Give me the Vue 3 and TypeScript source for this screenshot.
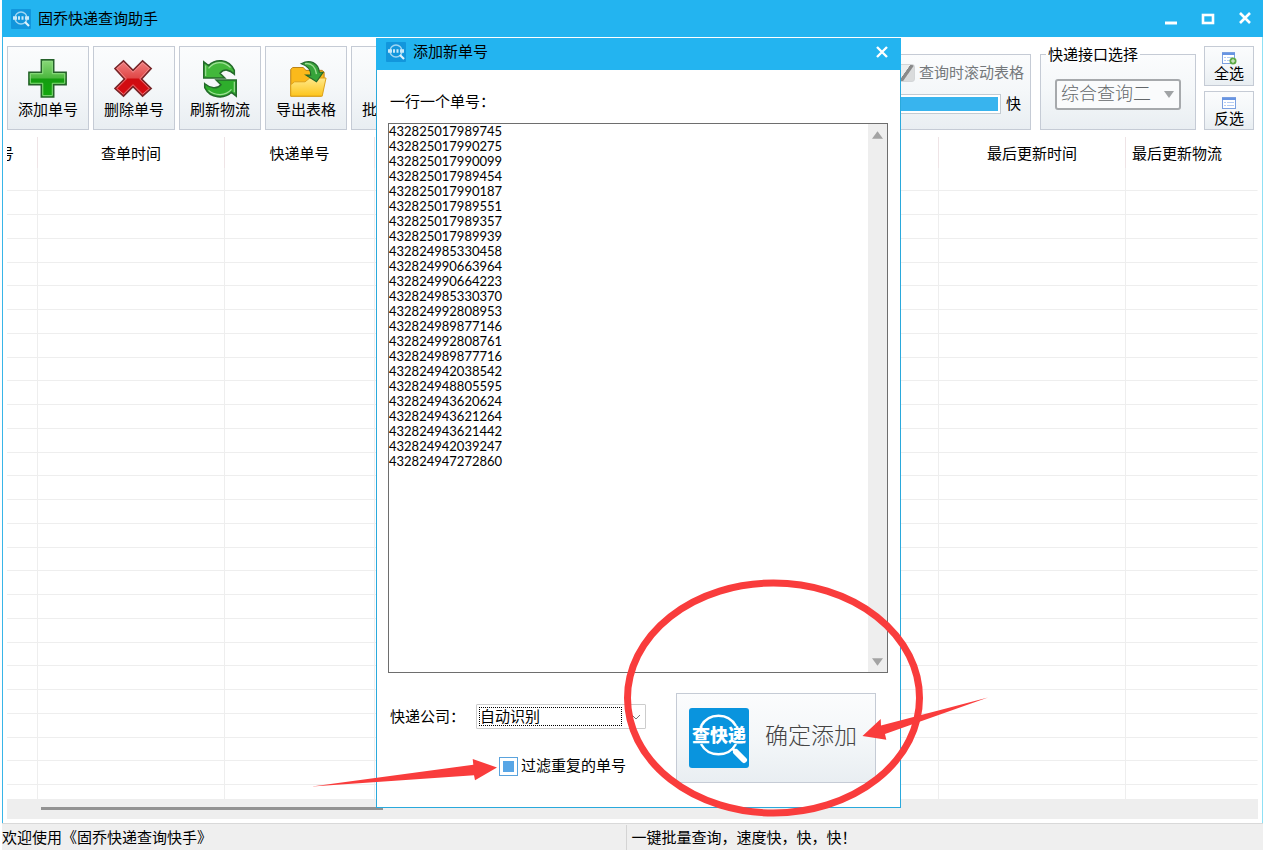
<script setup lang="ts">
import { ref } from 'vue'

interface Tool {
  icon: 'add' | 'remove' | 'refresh' | 'export' | 'batch'
  label: string
}

const tools: Tool[] = [
  { icon: 'add', label: '添加单号' },
  { icon: 'remove', label: '删除单号' },
  { icon: 'refresh', label: '刷新物流' },
  { icon: 'export', label: '导出表格' },
  { icon: 'batch', label: '批量操作' },
]

const rowCount = 26

const numbers = ref<string>(
  [
    '432825017989745',
    '432825017990275',
    '432825017990099',
    '432825017989454',
    '432825017990187',
    '432825017989551',
    '432825017989357',
    '432825017989939',
    '432824985330458',
    '432824990663964',
    '432824990664223',
    '432824985330370',
    '432824992808953',
    '432824989877146',
    '432824992808761',
    '432824989877716',
    '432824942038542',
    '432824948805595',
    '432824943620624',
    '432824943621264',
    '432824943621442',
    '432824942039247',
    '432824947272860',
  ].join('\n'),
)

const company = ref('自动识别')
const channel = ref('综合查询二')
const dedupe = ref(true)
const follow = ref(true)
</script>

<template>
  <div class="window">
    <header class="titlebar">
      <svg class="logo" viewBox="0 0 20 20" aria-hidden="true">
        <rect width="20" height="20" rx="1" fill="#1296dc" />
        <circle cx="10" cy="9" r="6" fill="none" stroke="#9ed6f3" stroke-width="1.4" />
        <path d="M14 13l4 4" stroke="#e3f4fc" stroke-width="2.2" />
        <path d="M2 9h4M7 9h2M10.500 9h2M14 9h4" stroke="#c9e9f9" stroke-width="3.600" />
      </svg>
      <h1>固乔快递查询助手</h1>
      <nav class="controls">
        <button type="button" aria-label="最小化">
          <svg viewBox="0 0 14 14"><path d="M1 11h12" stroke="#fff" stroke-width="3" /></svg>
        </button>
        <button type="button" aria-label="最大化">
          <svg viewBox="0 0 14 14"><rect x="2" y="3" width="10" height="8" fill="none" stroke="#fff" stroke-width="2.600" /></svg>
        </button>
        <button type="button" aria-label="关闭">
          <svg viewBox="0 0 14 14"><path d="M2 1l10 10M12 1L2 11" stroke="#fff" stroke-width="2.600" /></svg>
        </button>
      </nav>
    </header>

    <main class="content">
      <div class="toolbar">
        <button v-for="t in tools" :key="t.label" type="button" class="tool panel">
          <svg v-if="t.icon === 'add'" viewBox="0 0 44 44">
            <defs>
              <linearGradient id="green" x1="0" y1="0" x2="0" y2="1">
                <stop offset="0" stop-color="#8bd87a" /><stop offset=".48" stop-color="#4cb83f" />
                <stop offset=".52" stop-color="#149d10" /><stop offset="1" stop-color="#12a80c" />
              </linearGradient>
            </defs>
            <path d="M15 3h13v13h13v13H28v13H15V29H2V16h13z" fill="url(#green)" stroke="#25612a" stroke-width="1.600" />
            <path d="M16.500 4.500h10v13h13v10h-13v13h-10v-13h-13v-10h13z" fill="none" stroke="#8fdc83" stroke-width="1" />
          </svg>
          <svg v-else-if="t.icon === 'remove'" viewBox="0 0 44 44">
            <defs>
              <linearGradient id="red" x1="0" y1="0" x2="0" y2="1">
                <stop offset="0" stop-color="#f08080" /><stop offset=".48" stop-color="#e04848" />
                <stop offset=".52" stop-color="#cf0b10" /><stop offset="1" stop-color="#d60b12" />
              </linearGradient>
            </defs>
            <path d="M11 4l10 10L31 4l9 8-10 11 10 10-9 8-10-10-10 10-9-8 10-10L2 12z" fill="url(#red)" stroke="#762629" stroke-width="1.600" />
            <path d="M11 6l10 10L31 6l7 6-10 11 10 10-7 6-10-10-10 10-7-6 10-10L4 12z" fill="none" stroke="#f4999b" stroke-width=".8" />
          </svg>
          <svg v-else-if="t.icon === 'refresh'" viewBox="0 0 44 44">
            <path d="M5 5l5 4C17 2 31 1 37 14v4c-5-5-11-6-15-1l5 5H5z" fill="#42b83b" stroke="#246b2b" stroke-width="1.600" />
            <path d="M39 41l-5-4C27 44 12 44 6 32v-4c6 5 13 6 17 1l-5-5h21z" fill="#2eae2c" stroke="#246b2b" stroke-width="1.600" />
            <path d="M7 9v11M10 12C16 4 26 4 33 11M37 37V26M34 34c-6 7-17 7-24 1" fill="none" stroke="#a0df98" stroke-width="1.200" />
          </svg>
          <svg v-else-if="t.icon === 'export'" viewBox="0 0 44 44">
            <defs>
              <linearGradient id="yellow" x1="0" y1="0" x2="0" y2="1">
                <stop offset="0" stop-color="#ffe98b" /><stop offset="1" stop-color="#fdc51c" />
              </linearGradient>
            </defs>
            <path d="M6 41V13l2-2h11l3 3h17l2 2v12l-3 13z" fill="#fbb91b" stroke="#b87e12" stroke-width="1" />
            <path d="M6 41V29l4-3h11l5-4h17l-4 19z" fill="url(#yellow)" stroke="#dba01a" stroke-width="1" />
            <path d="M17 7C26 2 35 6 36 16h4l-7 10-11-7h5c0-6-4-10-10-12z" fill="#36a43a" stroke="#24662b" stroke-width="1.200" />
            <path d="M21 7c7-1 11 4 12 11" fill="none" stroke="#9edb93" stroke-width="1.500" />
          </svg>
          <svg v-else viewBox="0 0 44 44">
            <rect x="8" y="6" width="28" height="33" fill="#fff" stroke="#7c9bc4" />
          </svg>
          <span>{{ t.label }}</span>
        </button>

        <fieldset class="scroll-box panel">
          <label class="follow">
            <input v-model="follow" type="checkbox" />
            查询时滚动表格
          </label>
          <div class="speed">
            <label for="speed">快</label>
            <progress id="speed" value="100" max="100" />
          </div>
        </fieldset>

        <fieldset class="channel-box">
          <legend>快递接口选择</legend>
          <div class="channel">
            <select v-model="channel" aria-label="快递接口选择">
              <option>综合查询二</option>
            </select>
            <svg viewBox="0 0 10 7" aria-hidden="true"><path d="M0 0h10L5 7z" fill="#a0a3a5" /></svg>
          </div>
        </fieldset>

        <div class="picks">
          <button type="button" class="pick panel">
            <svg viewBox="0 0 16 14">
              <rect x="1.500" y="1.500" width="12" height="11" fill="#fff" stroke="#7ba0e0" />
              <path d="M1 3h13" stroke="#6794e2" stroke-width="2" />
              <path d="M3 6.500h2M6 6.500h6M3 9.500h2M6 9.500h3" stroke="#b4ccf3" />
              <circle cx="12" cy="10" r="3.500" fill="#5eaa46" /><path d="M10 10h4M12 8v4" stroke="#e7f5df" />
            </svg>
            <span>全选</span>
          </button>
          <button type="button" class="pick panel">
            <svg viewBox="0 0 16 14">
              <rect x="1.500" y="1.500" width="13" height="11" fill="#fff" stroke="#7ba0e0" />
              <path d="M1 3h14" stroke="#6794e2" stroke-width="2" />
              <path d="M3 6.500h2M6 6.500h7M3 9.500h2M6 9.500h7" stroke="#b4ccf3" />
            </svg>
            <span>反选</span>
          </button>
        </div>
      </div>

      <table class="grid">
        <colgroup>
          <col class="c-index" /><col class="c-time" /><col class="c-number" /><col /><col class="c-time" /><col class="c-flow" />
        </colgroup>
        <thead>
          <tr>
            <th><span class="clipped">号</span></th>
            <th>查单时间</th>
            <th>快递单号</th>
            <th></th>
            <th>最后更新时间</th>
            <th class="left">最后更新物流</th>
          </tr>
        </thead>
        <tbody>
          <tr v-for="r in rowCount" :key="r"><td v-for="c in 6" :key="c"></td></tr>
          <tr class="tail"><td v-for="c in 6" :key="c"></td></tr>
        </tbody>
      </table>
      <div class="hscroll"><div class="thumb"></div></div>
    </main>

    <footer class="status">
      <span>欢迎使用《固乔快递查询快手》</span>
      <span>一键批量查询，速度快，快，快！</span>
    </footer>

    <section class="dialog" role="dialog" aria-labelledby="dialog-title">
      <header class="dialog-title">
        <svg class="logo" viewBox="0 0 20 20" aria-hidden="true">
          <rect width="20" height="20" rx="1" fill="#1296dc" />
          <circle cx="10" cy="9" r="6" fill="none" stroke="#9ed6f3" stroke-width="1.4" />
          <path d="M14 13l4 4" stroke="#e3f4fc" stroke-width="2.2" />
          <path d="M2 9h4M7 9h2M10.500 9h2M14 9h4" stroke="#c9e9f9" stroke-width="3.600" />
        </svg>
        <h2 id="dialog-title">添加新单号</h2>
        <button type="button" aria-label="关闭">
          <svg viewBox="0 0 14 14"><path d="M2 2l10 10M12 2L2 12" stroke="#fff" stroke-width="2.400" /></svg>
        </button>
      </header>
      <div class="dialog-body">
        <label for="numbers">一行一个单号：</label>
        <div class="editor">
          <textarea id="numbers" v-model="numbers" spellcheck="false"></textarea>
          <div class="vscroll">
            <button type="button" aria-label="向上"><svg viewBox="0 0 12 8"><path d="M6 0l6 8H0z" fill="#a3a3a3" /></svg></button>
            <button type="button" aria-label="向下"><svg viewBox="0 0 12 8"><path d="M0 0h12L6 8z" fill="#a3a3a3" /></svg></button>
          </div>
        </div>
        <div class="bottom">
          <div class="options">
            <div class="company">
              <label for="company">快递公司：</label>
              <div class="combo">
                <select id="company" v-model="company"><option>自动识别</option></select>
                <svg viewBox="0 0 10 6" aria-hidden="true"><path d="M1 1l4 4 4-4" fill="none" stroke="#777" /></svg>
              </div>
            </div>
            <label class="dedupe"><input v-model="dedupe" type="checkbox" />过滤重复的单号</label>
          </div>
          <button type="button" class="confirm panel">
            <span class="brand">
              <svg viewBox="0 0 60 60" aria-hidden="true">
                <rect width="60" height="60" rx="3" fill="#0994de" />
                <path d="M12 18A20 20 0 0 1 47 18M12 36A20 20 0 0 0 47 36" fill="none" stroke="#fff" stroke-width="2.500" />
                <path d="M43 40l4 4" stroke="#fff" stroke-width="3" />
                <path d="M47 44l8 8" stroke="#fff" stroke-width="6" stroke-linecap="round" />
                <text x="30" y="34" text-anchor="middle">查快递</text>
              </svg>
            </span>
            <span class="confirm-label">确定添加</span>
          </button>
        </div>
      </div>

      <svg class="marks" viewBox="312 578 680 240" aria-hidden="true">
        <ellipse cx="773.500" cy="698" rx="146" ry="115" fill="none" stroke="#f93c3c" stroke-width="7" />
        <path d="M312 786.500L473.300 764.700 472.700 759 497 767.500 475 780.300 474 775.300z" fill="#f93c3c" />
        <path d="M988 697.500L881 725.500 880.700 719 862.500 736 886.300 739.800 885 734z" fill="#f93c3c" />
      </svg>
    </section>
  </div>
</template>

<style>
body {
  margin: 0;
  background: #fff;
}
</style>

<style scoped>
* {
  box-sizing: border-box;
}
.window {
  position: relative;
  display: flex;
  flex-direction: column;
  min-height: 100vh;
  padding-left: 2px;
  overflow: hidden;
  font: 15px/20px "Liberation Sans", "Noto Sans CJK SC", sans-serif;
  color: #000;
}
button,
select,
input,
textarea {
  font: inherit;
  color: inherit;
  margin: 0;
  padding: 0;
  border: 0;
  background: none;
}
h1,
h2 {
  margin: 0;
  font-size: 15px;
  font-weight: 400;
  flex: 1;
}
.titlebar,
.dialog-title {
  display: flex;
  align-items: center;
  gap: 7px;
  background: #23b4f0;
}
.titlebar {
  height: 37px;
  padding: 0 9px;
}
.logo {
  width: 20px;
  height: 20px;
}
.controls {
  display: flex;
  gap: 19px;
}
.controls button,
.dialog-title button {
  display: flex;
  padding: 2px;
}
.controls svg,
.dialog-title button svg {
  width: 14px;
  height: 14px;
}
.content {
  flex: 1;
  display: flex;
  flex-direction: column;
  padding: 9px 4px 4px;
  border-left: 1px solid #38b5e8;
  border-right: 1px solid #8fe0f5;
}
.panel {
  border: 1px solid #c5cbd5;
  background: linear-gradient(#fbfcfd, #f4f7f9 50%, #e9eef2);
}
.toolbar {
  display: flex;
  gap: 4px;
  height: 84px;
  padding-right: 4px;
}
.tool {
  flex: none;
  display: flex;
  flex-direction: column;
  align-items: center;
  gap: 1px;
  width: 82px;
  padding-top: 10px;
}
.tool svg {
  width: 42px;
  height: 42px;
}
fieldset {
  margin: 0;
  min-width: 0;
}
.scroll-box {
  flex: 1;
  display: flex;
  flex-direction: column;
  gap: 11px;
  margin-top: 8px;
  padding: 8px 6px;
}
.follow {
  display: flex;
  justify-content: flex-end;
  align-items: center;
  gap: 4px;
  color: #74787b;
}
.follow input {
  appearance: none;
  width: 18px;
  height: 18px;
  border: 1px solid #d3d6d8;
  border-radius: 3px;
  background: linear-gradient(125deg, #eceeef 44%, #8a8a8a 46%, #8a8a8a 58%, #d9dbdc 62%);
}
.speed {
  display: flex;
  flex-direction: row-reverse;
  align-items: center;
  gap: 5px;
  padding-right: 3px;
}
progress {
  appearance: none;
  width: 200px;
  height: 20px;
  padding: 2px;
  border: 1px solid #c3cbd2;
  background: #fff;
}
progress::-webkit-progress-bar {
  background: #fff;
}
progress::-webkit-progress-value {
  background: #38b4ee;
}
.channel-box {
  position: relative;
  width: 156px;
  height: 84px;
  margin-left: 5px;
  padding: 0 15px;
  border: 0;
}
.channel-box::before {
  content: "";
  position: absolute;
  inset: 8px 0 0;
  border: 1px solid #c5cbd5;
  background: linear-gradient(#fbfcfd, #f4f7f9 50%, #e9eef2);
}
.channel-box legend {
  float: left;
  position: relative;
  margin-left: -9px;
  padding: 0 2px;
  height: 18px;
  line-height: 18px;
  background: linear-gradient(#fff 50%, #fbfcfd 50%);
  white-space: nowrap;
}
.channel {
  position: relative;
  display: flex;
  clear: both;
  align-items: center;
  padding-top: 15px;
}
.channel select {
  appearance: none;
  width: 100%;
  height: 31px;
  padding: 0 4px 2px;
  border: 2px solid #a6a9ac;
  border-radius: 3px;
  background: #fafbfc;
  font-size: 18px;
  font-weight: 300;
  line-height: 24px;
  color: #63676a;
}
.channel svg {
  position: absolute;
  right: 7px;
  width: 10px;
  height: 7px;
}
.picks {
  display: flex;
  flex-direction: column;
  gap: 5px;
  margin-left: 4px;
}
.pick {
  display: flex;
  flex: 1;
  flex-direction: column;
  align-items: center;
  width: 50px;
  padding-top: 4px;
}
.pick svg {
  flex: none;
  width: 16px;
  height: 14px;
}
.pick span {
  line-height: 18px;
}
.grid {
  flex: 1;
  width: 100%;
  margin-top: 7px;
  table-layout: fixed;
  border-collapse: separate;
  border-spacing: 0;
}
.c-index {
  width: 31px;
}
.c-time {
  width: 187px;
}
.c-number {
  width: 150px;
}
.c-flow {
  width: 132px;
}
th {
  height: 31px;
  padding: 2px 0 0;
  font-weight: 400;
  border-right: 1px solid #eee4e6;
}
td {
  padding: 0;
  border-right: 1px solid #eee;
  border-bottom: 1px solid #eee;
}
th:last-child,
td:last-child {
  border-right-color: transparent;
}
th.left {
  text-align: left;
  padding-left: 6px;
}
.clipped {
  display: flex;
  justify-content: flex-end;
  width: 7px;
  overflow: hidden;
}
tbody tr {
  height: 24px;
}
tbody tr:nth-child(4n + 1) {
  height: 23px;
}
tbody .tail {
  height: auto;
}
.tail td {
  border-bottom: 0;
}
.hscroll {
  height: 20px;
  padding: 8px 34px;
  background: #eee;
}
.thumb {
  width: 342px;
  height: 3px;
  background: #929292;
}
.status {
  display: flex;
  height: 27px;
  align-items: center;
  border-top: 1px solid #d9d9d9;
  background: #efefef;
  line-height: 25px;
}
.status span {
  flex: 1;
}
.status span:first-child {
  flex: 0 0 calc(50% - 7px);
}
.status span + span {
  padding-left: 5px;
  border-left: 1px solid #d4d4d4;
}
.dialog {
  position: absolute;
  top: 38px;
  left: 376px;
  width: 525px;
  border: 1px solid #2aa9dc;
  background: #fff;
}
.dialog-title {
  height: 32px;
  margin: -1px -1px 0;
  padding: 0 10px 4px;
}
.dialog-body {
  display: flex;
  flex-direction: column;
  padding: 22px 12px 24px 11px;
}
.dialog-body > label {
  padding-left: 2px;
}
.editor {
  display: flex;
  height: 550px;
  margin-top: 11px;
  border: 1px solid #6e6e6e;
}
textarea {
  flex: 1;
  resize: none;
  outline: 0;
  overflow: hidden;
  font: 13px/15px Lato, sans-serif;
}
.vscroll {
  display: flex;
  flex-direction: column;
  justify-content: space-between;
  width: 19px;
  background: #eee;
}
.vscroll button {
  display: flex;
  justify-content: center;
  padding: 7px 0 6px;
}
.vscroll svg {
  width: 11px;
  height: 8px;
}
.bottom {
  display: flex;
  justify-content: space-between;
  margin-top: 20px;
  padding-right: 12px;
}
.options {
  display: flex;
  flex-direction: column;
  gap: 27px;
  padding: 11px 0 0 2px;
}
.company {
  display: flex;
  align-items: center;
}
.company label {
  width: 86px;
}
.combo {
  position: relative;
  display: flex;
  align-items: center;
  width: 170px;
  height: 25px;
  padding: 2px;
  border: 1px solid #ccc;
  border-radius: 1px;
}
.combo select {
  appearance: none;
  width: 143px;
  height: 19px;
  border: 1px dotted #000;
  line-height: 17px;
}
.combo svg {
  position: absolute;
  right: 4px;
  width: 10px;
  height: 6px;
}
.dedupe {
  display: flex;
  align-items: center;
  gap: 3px;
  padding-left: 109px;
}
.dedupe input {
  appearance: none;
  width: 19px;
  height: 19px;
  padding: 3px;
  border: 1px solid #5aa3dd;
}
.dedupe input:checked {
  background: #58a6e6 content-box;
}
.confirm {
  display: flex;
  align-items: center;
  gap: 16px;
  width: 200px;
  height: 90px;
  padding-left: 12px;
  font-size: 23px;
  color: #444;
}
.confirm-label {
  padding-bottom: 4px;
  font-weight: 300;
}
.brand,
.brand svg {
  display: block;
  width: 60px;
  height: 60px;
}
.brand text {
  fill: #fff;
  font-size: 18px;
  font-weight: 900;
}
.marks {
  position: absolute;
  top: 539px;
  left: -65px;
  width: 680px;
  height: 240px;
  pointer-events: none;
}
</style>
